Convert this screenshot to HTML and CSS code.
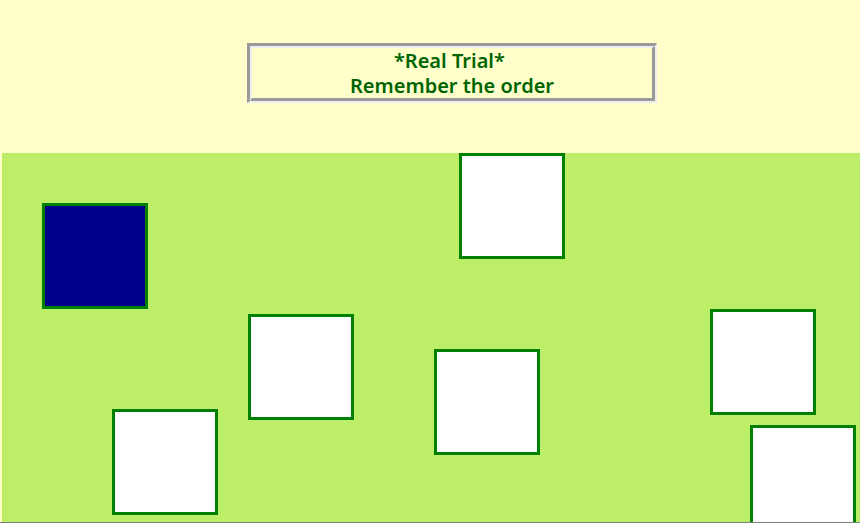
FILE: index.html
```html
<!DOCTYPE html>
<html lang="en">
<head>
<meta charset="utf-8">
<title>Real Trial</title>
<link rel="stylesheet" href="styles.css">
</head>
<body>
<header class="banner">
  <div class="frame">
    <p class="message">*Real Trial*&nbsp;<br>Remember the order</p>
  </div>
</header>
<main class="field">
  <button type="button" class="block block-1 lit"></button>
  <button type="button" class="block block-2"></button>
  <button type="button" class="block block-3"></button>
  <button type="button" class="block block-4"></button>
  <button type="button" class="block block-5"></button>
  <button type="button" class="block block-6"></button>
  <button type="button" class="block block-7"></button>
</main>
</body>
</html>
```
FILE: styles.css
```css
* {
  box-sizing: border-box;
}

body {
  margin: 0;
  height: 100vh;
  display: flex;
  flex-direction: column;
  overflow: hidden;
  background: #ffffcc;
  border-bottom: 1px solid #808080;
}

.banner {
  display: flex;
  justify-content: center;
  padding: 43px 0 50px 44px;
}

/* Two nested bevels form the grooved frame. */
.frame {
  width: 410px;
  border: solid #999999;
  border-width: 3px 2px 2px 3px;
  border-right-color: #eeeeee;
  border-bottom-color: #eeeeee;
}

.message {
  margin: 0;
  border: solid #eeeeee;
  border-width: 2px 3px 3px 2px;
  border-right-color: #999999;
  border-bottom-color: #999999;
  color: #006400;
  font: 600 20px/25px "Trebuchet MS", "Noto Sans", sans-serif;
  text-align: center;
}

.field {
  position: relative;
  flex: 1;
  min-height: 0;
  margin-left: 2px;
  overflow: hidden;
  background: #bcee68;
}

.block {
  position: absolute;
  width: 106px;
  height: 106px;
  padding: 0;
  border: 3px solid #008000;
  border-radius: 0;
  background: #ffffff;
}

.lit {
  background: #00008b;
}

.block-1 { left: 40px; top: 50px; }
.block-2 { left: 457px; top: 0; }
.block-3 { left: 246px; top: 161px; }
.block-4 { left: 432px; top: 196px; }
.block-5 { left: 708px; top: 156px; }
.block-6 { left: 110px; top: 256px; }
.block-7 { left: 748px; top: 272px; }
```
